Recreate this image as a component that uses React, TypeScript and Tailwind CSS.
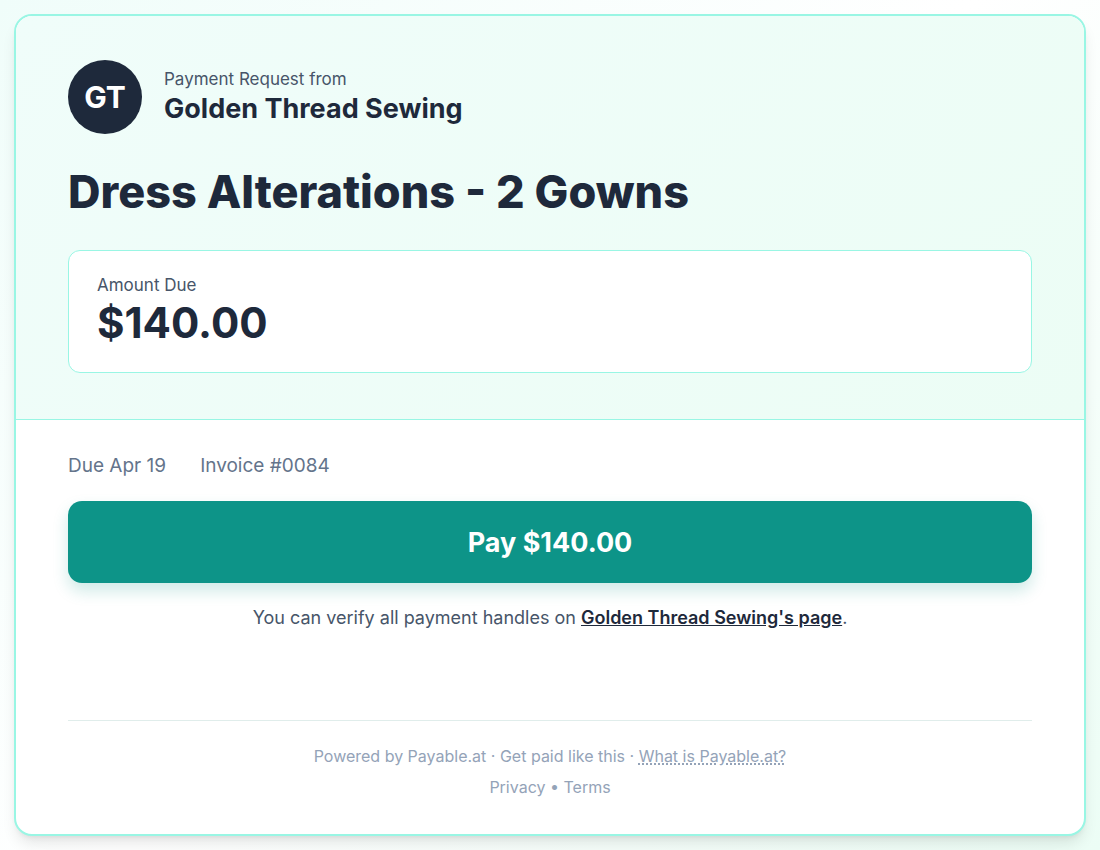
export default function App() {
  return (
    <div className="flex min-h-screen flex-col bg-[linear-gradient(135deg,#f0fdfa,#ffffff_50%,#ecfdf5)] p-3.5 font-['Inter',sans-serif]">
      <main className="flex flex-1 flex-col overflow-hidden rounded-[18px] border-2 border-[#99f6e4] bg-white shadow-lg">
        <header className="border-b border-[#99f6e4] bg-[linear-gradient(135deg,#f0fdfa,#ecfdf5)] px-13 pt-11 pb-[46px]">
          <div className="flex items-center gap-[22px]">
            <div className="flex size-[74px] items-center justify-center rounded-full bg-[#1e293b] text-[30px] font-bold text-white">
              GT
            </div>
            <div className="pb-0.5">
              <p className="text-[17px] leading-[26px] text-[#475569]">Payment Request from</p>
              <p className="text-[27px] leading-[34px] font-bold text-[#1e293b]">Golden Thread Sewing</p>
            </div>
          </div>
          <h1 className="mt-[30px] text-[45px] leading-[56px] font-extrabold text-[#1e293b]">
            Dress Alterations - 2 Gowns
          </h1>
          <div className="mt-[30px] rounded-xl border border-[#99f6e4] bg-white px-7 pt-[21px] pb-6">
            <p className="text-[17px] leading-[26px] text-[#475569]">Amount Due</p>
            <p className="text-[42px] leading-[50px] font-bold text-[#1e293b]">$140.00</p>
          </div>
        </header>

        <section className="flex flex-1 flex-col px-13 pt-8">
          <div className="flex gap-[34px] text-[19px] leading-7 text-[#64748b]">
            <span>Due Apr 19</span>
            <span>Invoice #0084</span>
          </div>
          <button
            type="button"
            className="mt-[21px] w-full rounded-[14px] bg-[#0d9488] pt-[22px] pb-5 text-[27px] leading-10 font-bold text-white shadow-[0_8px_16px_#0d948833]"
          >
            Pay $140.00
          </button>
          <p className="mt-[21px] text-center text-[18px] leading-7 text-[#475569]">
            You can verify all payment handles on{" "}
            <a href="#page" className="font-semibold text-[#1e293b] underline">
              Golden Thread Sewing's page
            </a>
            .
          </p>

          <footer className="mt-22 border-t border-[#e0edeb] pt-[21px] text-center text-[16px] text-[#94a3b8]">
            <p className="leading-7">
              Powered by Payable.at · Get paid like this ·{" "}
              <a href="#about" className="underline decoration-dotted decoration-2">
                What is Payable.at?
              </a>
            </p>
            <p className="mt-[3px] leading-7">
              <a href="#privacy">Privacy</a> • <a href="#terms">Terms</a>
            </p>
          </footer>
        </section>
      </main>
    </div>
  )
}
